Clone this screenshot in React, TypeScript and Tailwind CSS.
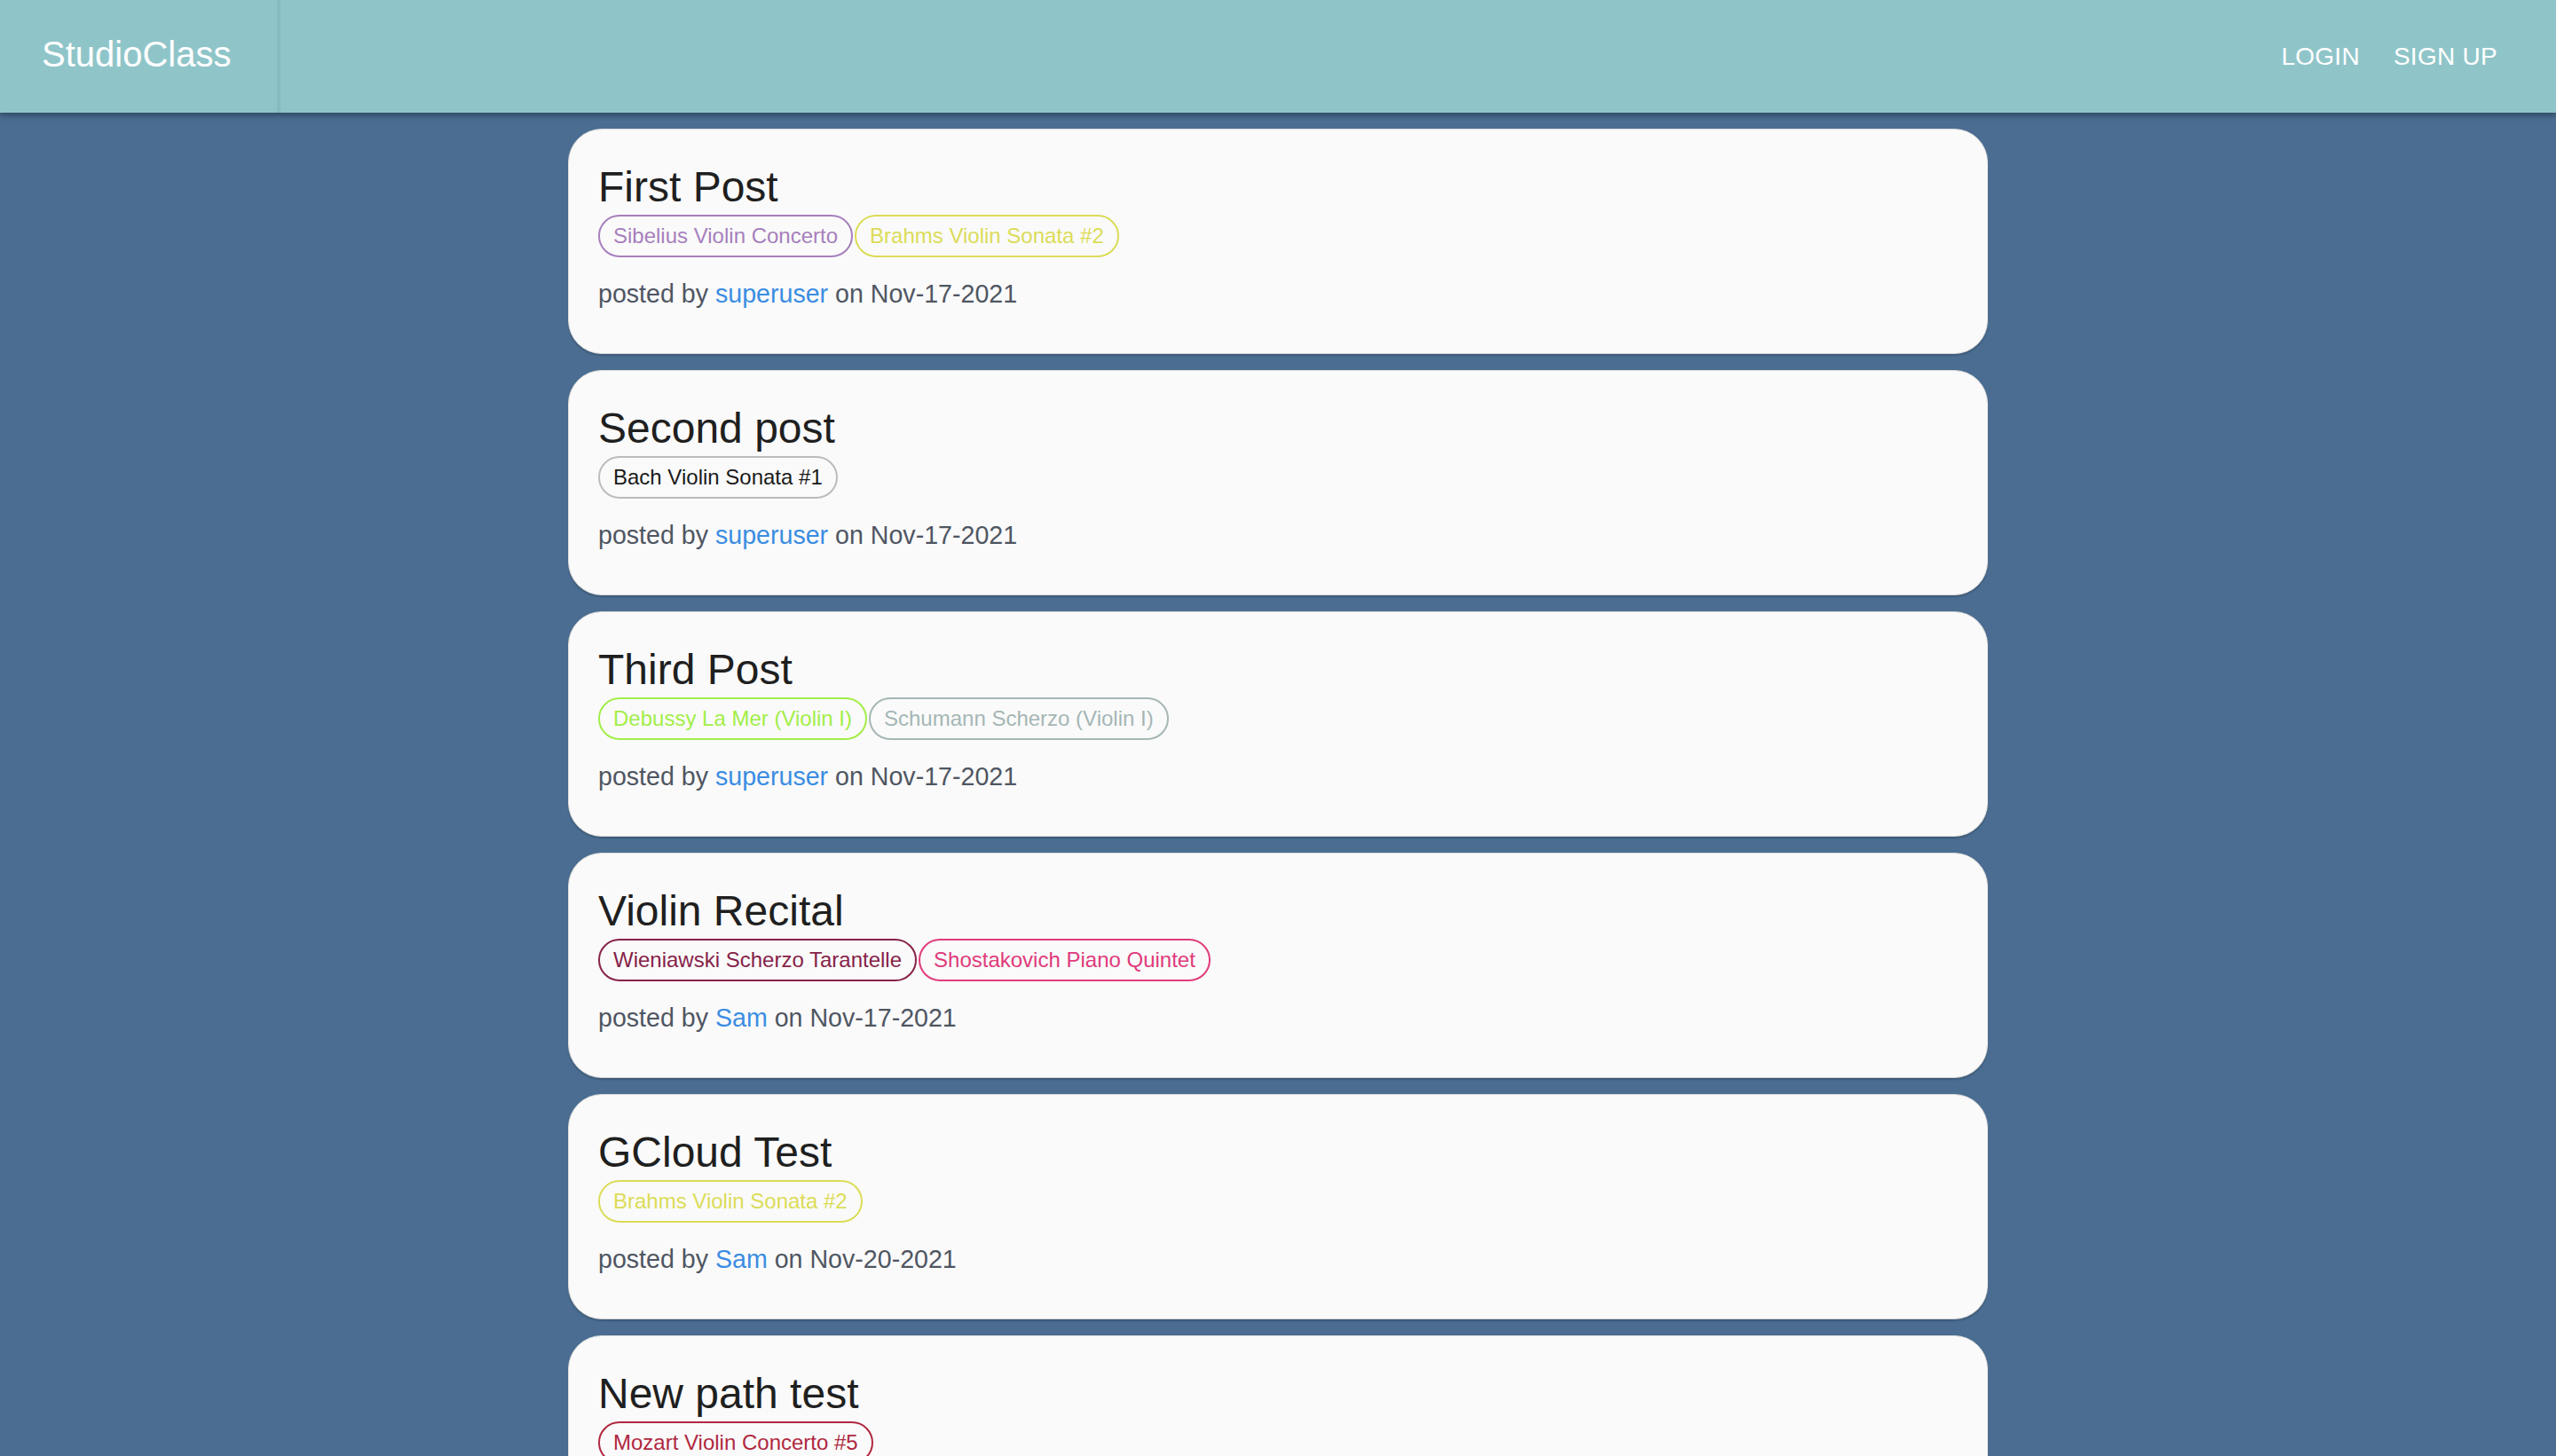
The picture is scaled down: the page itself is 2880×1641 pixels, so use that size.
import React from "react";

type Tag = { label: string; color: string; text?: string };
type Post = { title: string; tags: Tag[]; author: string; date: string };

const posts: Post[] = [
  {
    title: "First Post",
    tags: [
      { label: "Sibelius Violin Concerto", color: "#a77fbd" },
      { label: "Brahms Violin Sonata #2", color: "#dcdc58" },
    ],
    author: "superuser",
    date: "Nov-17-2021",
  },
  {
    title: "Second post",
    tags: [{ label: "Bach Violin Sonata #1", color: "#bcbcbc", text: "#1a1a1a" }],
    author: "superuser",
    date: "Nov-17-2021",
  },
  {
    title: "Third Post",
    tags: [
      { label: "Debussy La Mer (Violin I)", color: "#a2ee48" },
      { label: "Schumann Scherzo (Violin I)", color: "#a5b6b5" },
    ],
    author: "superuser",
    date: "Nov-17-2021",
  },
  {
    title: "Violin Recital",
    tags: [
      { label: "Wieniawski Scherzo Tarantelle", color: "#862249" },
      { label: "Shostakovich Piano Quintet", color: "#e03b7b" },
    ],
    author: "Sam",
    date: "Nov-17-2021",
  },
  {
    title: "GCloud Test",
    tags: [{ label: "Brahms Violin Sonata #2", color: "#dcdc58" }],
    author: "Sam",
    date: "Nov-20-2021",
  },
  {
    title: "New path test",
    tags: [{ label: "Mozart Violin Concerto #5", color: "#b0283f" }],
    author: "superuser",
    date: "Nov-20-2021",
  },
];

const narrow = { fontFamily: '"Liberation Sans Narrow", "Liberation Sans", Arial, sans-serif' };

function Card({ post }: { post: Post }) {
  return (
    <div
      className="w-[1600px] shrink-0 rounded-[38px] bg-[#fafafa] border border-[#d8d8d8] shadow-[0_2px_2px_rgba(0,0,0,0.18)] pl-[33px] pr-[33px] pt-[37px] pb-[49px]"
      style={narrow}
    >
      <div className="text-[48px] leading-[56px] text-[#1f1f1f]">{post.title}</div>
      <div className="mt-[3px] flex gap-[2px]">
        {post.tags.map((t) => (
          <div
            key={t.label}
            className="h-[48px] flex items-center rounded-full border-2 px-[15px] text-[24px] leading-[30px]"
            style={{ borderColor: t.color, color: t.text ?? t.color }}
          >
            {t.label}
          </div>
        ))}
      </div>
      <div className="mt-[23px] text-[28.6px] leading-[36px] text-[#4f5662]">
        posted by <span className="text-[#3b8de2]">{post.author}</span> on {post.date}
      </div>
    </div>
  );
}

export default function App() {
  return (
    <div className="min-h-screen bg-[#4a6d91]" style={{ fontFamily: '"Liberation Sans", Arial, sans-serif' }}>
      <header className="relative z-10 h-[127px] flex items-stretch bg-[#8fc5c9] shadow-[0_3px_6px_rgba(0,0,0,0.35)]">
        <div className="w-[312px] flex items-center pl-[47px] pb-[6px] text-[40px] text-white">StudioClass</div>
        <div className="w-[4px] bg-[#86bbbf]" />
        <div className="flex-1" />
        <nav className="flex items-center gap-[38px] pr-[66px] text-[28px] text-white tracking-[0.01em]">
          <span>LOGIN</span>
          <span>SIGN UP</span>
        </nav>
      </header>
      <main className="flex flex-col items-center gap-[18px] pt-[18px] pb-[18px]">
        {posts.map((p) => (
          <Card key={p.title} post={p} />
        ))}
      </main>
    </div>
  );
}
